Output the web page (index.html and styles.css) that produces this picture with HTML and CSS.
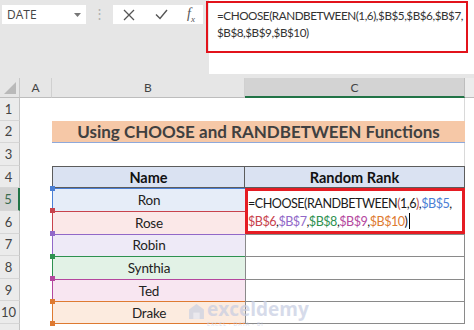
FILE: index.html
```html
<!DOCTYPE html>
<html lang="en">
<head>
    <meta charset="UTF-8">
    <title>CHOOSE and RANDBETWEEN</title>
    <link rel="stylesheet" href="styles.css">
</head>
<body>
    <div class="toolbar">
        <div class="namebox">
            <span>DATE</span>
            <svg width="7" height="4" viewBox="0 0 7 4"><path d="M0 0h7L3.5 4z" fill="#777"/></svg>
        </div>
        <div class="grip">&#8942;</div>
        <div class="fxbtns">
            <svg width="12" height="12" viewBox="0 0 12 12"><path d="M1 1l10 10M11 1L1 11" stroke="#555" stroke-width="1.3" fill="none"/></svg>
            <svg width="13" height="11" viewBox="0 0 13 11"><path d="M1 5.5l4 4L12 1" stroke="#555" stroke-width="1.4" fill="none"/></svg>
            <span class="fx">f<sub>x</sub></span>
        </div>
        <div class="formula">
            <div class="formula-box">=CHOOSE(RANDBETWEEN(1,6),$B$5,$B$6,$B$7,<br>$B$8,$B$9,$B$10)</div>
        </div>
    </div>

    <div class="sheet">
        <!-- column headers -->
        <div class="corner"><svg width="12" height="12" viewBox="0 0 12 12"><path d="M12 0v12H0z" fill="#b9b9b9"/></svg></div>
        <div class="colhead">A</div>
        <div class="colhead">B</div>
        <div class="colhead active">C</div>
        <div class="colhead last"></div>

        <!-- row 1 -->
        <div class="rowhead">1</div>
        <div></div><div></div><div class="edge"></div><div></div>

        <!-- row 2 -->
        <div class="rowhead">2</div>
        <div></div>
        <div class="title">Using CHOOSE and RANDBETWEEN Functions</div>
        <div></div>

        <!-- row 3 -->
        <div class="rowhead">3</div>
        <div></div><div></div><div class="edge"></div><div></div>

        <!-- row 4 -->
        <div class="rowhead">4</div>
        <div></div>
        <div class="th name">Name</div>
        <div class="th rank">Random Rank</div>
        <div></div>

        <!-- row 5 -->
        <div class="rowhead active">5</div>
        <div></div>
        <div class="name-cell ref-blue">Ron</div>
        <div class="editor">
            <span>=CHOOSE(RANDBETWEEN<span class="paren">(</span>1,6<span class="paren">)</span>,<span class="t-blue">$B$5</span>,</span><br><span class="t-red">$B$6</span>,<span class="t-purple">$B$7</span>,<span class="t-green">$B$8</span>,<span class="t-magenta">$B$9</span>,<span class="t-orange">$B$10</span>)<span class="caret"></span>
        </div>
        <div></div>

        <!-- row 6 -->
        <div class="rowhead">6</div>
        <div></div>
        <div class="name-cell ref-red">Rose</div>
        <div></div>

        <!-- row 7 -->
        <div class="rowhead">7</div>
        <div></div>
        <div class="name-cell ref-purple">Robin</div>
        <div class="rank-cell"></div>
        <div></div>

        <!-- row 8 -->
        <div class="rowhead">8</div>
        <div></div>
        <div class="name-cell ref-green">Synthia</div>
        <div class="rank-cell"></div>
        <div></div>

        <!-- row 9 -->
        <div class="rowhead">9</div>
        <div></div>
        <div class="name-cell ref-magenta">Ted</div>
        <div class="rank-cell"></div>
        <div></div>

        <!-- row 10 -->
        <div class="rowhead">10</div>
        <div></div>
        <div class="name-cell ref-orange">Drake</div>
        <div class="rank-cell last-rank"></div>
        <div></div>

        <!-- row 11 -->
        <div class="rowhead"></div>
        <div></div><div></div><div></div><div></div>

        <div class="watermark">
            <svg width="17" height="17" viewBox="0 0 16 16"><path d="M8 1L1 6v9h14V6z" fill="#c9d0e3"/><path d="M5 9h6v6H5z" fill="#e3e8f3"/></svg>
            <div class="wm-text">
                <span class="wm-name">exceldemy</span>
                <span class="wm-tag">EXCEL · DATA · BI</span>
            </div>
        </div>
    </div>
</body>
</html>
```

FILE: styles.css
```css
* {
    box-sizing: border-box;
}
body {
    margin: 0;
    width: 474px;
    height: 330px;
    overflow: hidden;
    background: #fff;
    font-family: Lato, "Noto Sans", sans-serif;
    color: #222;
}

/* formula bar */
.toolbar {
    display: flex;
    align-items: flex-start;
    height: 78px;
    background: #e6e6e6;
}
.namebox {
    flex-shrink: 0;
    display: flex;
    align-items: center;
    justify-content: space-between;
    width: 84px;
    height: 19px;
    margin: 5px 0 0 2px;
    padding: 0 5px 0 5px;
    background: #fff;
    font: 12px "Open Sans", sans-serif;
    color: #444;
}
.grip {
    flex-shrink: 0;
    width: 27px;
    margin-top: 5px;
    text-align: center;
    color: #b0b0b0;
    font-size: 13px;
}
.fxbtns {
    flex-shrink: 0;
    display: flex;
    align-items: center;
    justify-content: space-between;
    width: 90px;
    height: 19px;
    margin-top: 5px;
    padding: 0 8px 0 10px;
    background: #fff;
}
.fx {
    font: italic 14px "Liberation Serif", serif;
    color: #555;
}
.fx sub {
    font-size: 9px;
}
.formula {
    flex: 1;
    min-width: 0;
    height: 74px;
    margin-left: 6px;
    padding-right: 6px;
    background: #fff;
}
.formula-box {
    height: 52px;
    margin-left: -3px;
    margin-top: 1px;
    padding: 4px 0 0 9px;
    border: 2.5px solid #e2131b;
    font-size: 11.7px;
    line-height: 17px;
    letter-spacing: -0.45px;
    color: #333;
    white-space: nowrap;
    overflow: hidden;
}

/* sheet grid */
.sheet {
    position: relative;
    display: grid;
    grid-template-columns: 20px 32px 193px 220px 9px;
    grid-template-rows: 20px repeat(10, 22.6px) 8px;
}
.corner {
    display: flex;
    align-items: flex-end;
    justify-content: flex-end;
    padding: 0 3px 3px 0;
    background: #e6e6e6;
    border-bottom: 1px solid #bdbdbd;
    border-right: 1px solid #c8c8c8;
}
.colhead {
    display: flex;
    align-items: center;
    justify-content: center;
    background: #e6e6e6;
    border-bottom: 1px solid #bdbdbd;
    border-right: 1px solid #d0d0d0;
    font-size: 12px;
    color: #444;
}
.colhead.active {
    background: #d3d3d3;
    border-bottom: 2px solid #217346;
    border-right-color: #bdbdbd;
}
.colhead.last {
    background: #ececec;
    border-right: none;
}
.rowhead {
    display: flex;
    align-items: center;
    justify-content: center;
    padding-right: 2px;
    background: #ebebeb;
    border-bottom: 1px solid #d6d6d6;
    border-right: 1px solid #c4c4c4;
    font-size: 13px;
    color: #444;
}
.rowhead.active {
    background: #d3d3d3;
    border-right: 2px solid #217346;
    color: #3a6b4f;
}
.edge {
    border-right: 1px solid #d9d9d9;
}

.title {
    grid-column: 3 / span 2;
    display: flex;
    align-items: center;
    justify-content: center;
    background: #f6c8a7;
    border-bottom: 1.5px solid #8ea9db;
    font-weight: bold;
    font-size: 17px;
    color: #404040;
}

.th {
    display: flex;
    align-items: center;
    justify-content: center;
    background: #dae2f2;
    border: 1px solid #5c5c5c;
    font-weight: bold;
    font-size: 14.5px;
    color: #111;
}
.th.rank {
    border-left: none;
}

.name-cell {
    position: relative;
    display: flex;
    align-items: center;
    justify-content: center;
    border-top: 1.5px solid;
    border-left: 1.5px solid;
    font-size: 13.5px;
    letter-spacing: -0.2px;
    color: #222;
}
.name-cell::before {
    content: "";
    position: absolute;
    left: -3.5px;
    top: -3.5px;
    width: 5px;
    height: 5px;
}
.ref-blue { border-color: #4a7ed4; background: #e6edf8; }
.ref-red { border-color: #c8424c; background: #fbe8e8; }
.ref-purple { border-color: #9168c8; background: #eeeaf7; }
.ref-green { border-color: #2e9150; background: #e2f2e6; }
.ref-magenta { border-color: #b4479e; background: #f8e6f1; }
.ref-orange { border-color: #de7a31; background: #fcebdf; border-bottom: 1.5px solid #de7a31; }
.ref-blue::before { background: #4a7ed4; }
.ref-red::before { background: #c8424c; }
.ref-purple::before { background: #9168c8; }
.ref-green::before { background: #2e9150; }
.ref-magenta::before { background: #b4479e; }
.ref-orange::before { background: #de7a31; }
.ref-orange::after {
    content: "";
    position: absolute;
    left: -3.5px;
    bottom: -3.5px;
    width: 5px;
    height: 5px;
    background: #de7a31;
}

.rank-cell {
    border-left: 1px solid #8a8a8a;
    border-right: 1px solid #8a8a8a;
    border-top: 1px solid #8a8a8a;
}
.rank-cell.last-rank {
    border-bottom: 1px solid #8a8a8a;
}

.editor {
    grid-row: span 2;
    padding: 4px 0 0 0;
    background: #fff;
    border: 3px solid #e51c23;
    font-size: 12.6px;
    line-height: 18px;
    letter-spacing: -0.5px;
    color: #1a1a1a;
    white-space: nowrap;
    overflow: hidden;
}
.paren { color: #c0504d; }
.t-blue { color: #4a7ed4; }
.t-red { color: #c8424c; }
.t-purple { color: #9168c8; }
.t-green { color: #2e9150; }
.t-magenta { color: #b4479e; }
.t-orange { color: #de7a31; }
.caret {
    display: inline-block;
    width: 1px;
    height: 16px;
    margin-left: 2px;
    vertical-align: -3px;
    background: #000;
}

.watermark {
    position: absolute;
    left: 188px;
    top: 218px;
    display: flex;
    align-items: center;
    gap: 2px;
    opacity: 0.7;
}
.wm-text {
    display: flex;
    flex-direction: column;
    line-height: 1;
}
.wm-name {
    font: bold 19px "Open Sans", sans-serif;
    color: #c6cde2;
}
.wm-tag {
    font-size: 5px;
    letter-spacing: 1px;
    color: #c6cde2;
}
```
